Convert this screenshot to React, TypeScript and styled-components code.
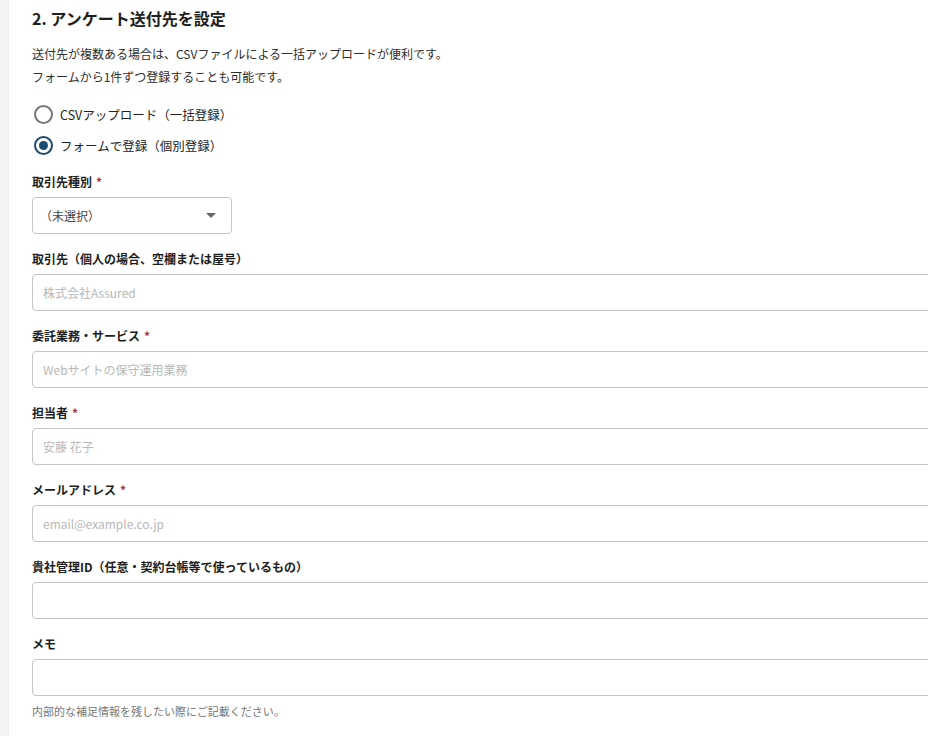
import React from "react";
import styled, { createGlobalStyle } from "styled-components";

const GlobalStyle = createGlobalStyle`
  html, body {
    margin: 0;
    padding: 0;
    background: #ffffff;
    overflow: hidden;
  }
  body {
    font-family: "Noto Sans CJK JP", "Noto Sans", sans-serif;
    color: #222;
  }
`;

interface FieldDef {
  label: string;
  required?: boolean;
  placeholder?: string;
  helper?: string;
}

const fields: FieldDef[] = [
  { label: "取引先（個人の場合、空欄または屋号）", placeholder: "株式会社Assured" },
  { label: "委託業務・サービス", required: true, placeholder: "Webサイトの保守運用業務" },
  { label: "担当者", required: true, placeholder: "安藤 花子" },
  { label: "メールアドレス", required: true, placeholder: "email@example.co.jp" },
  { label: "貴社管理ID（任意・契約台帳等で使っているもの）" },
  { label: "メモ", helper: "内部的な補足情報を残したい際にご記載ください。" },
];

const RadioOption = ({ label, checked }: { label: string; checked?: boolean }) => (
  <RadioRow>
    <RadioCircle checked={!!checked} />
    <RadioText>{label}</RadioText>
  </RadioRow>
);

const Field = ({ label, required, placeholder, helper }: FieldDef) => (
  <FieldBlock>
    <Label>
      {label}
      {required && <Star>*</Star>}
    </Label>
    <TextInput placeholder={placeholder} readOnly />
    {helper && <Helper>{helper}</Helper>}
  </FieldBlock>
);

export default function App() {
  return (
    <>
      <GlobalStyle />
      <Page>
        <Strip />
        <Main>
          <Title>2. アンケート送付先を設定</Title>
          <Description>
            送付先が複数ある場合は、CSVファイルによる一括アップロードが便利です。
            <br />
            フォームから1件ずつ登録することも可能です。
          </Description>
          <RadioGroup>
            <RadioOption label="CSVアップロード（一括登録）" />
            <RadioOption label="フォームで登録（個別登録）" checked />
          </RadioGroup>
          <Form>
            <FieldBlock>
              <Label>
                取引先種別<Star>*</Star>
              </Label>
              <Select>
                <span>（未選択）</span>
                <Caret />
              </Select>
            </FieldBlock>
            {fields.map((f) => (
              <Field key={f.label} {...f} />
            ))}
          </Form>
        </Main>
      </Page>
    </>
  );
}

const Page = styled.div`
  display: flex;
  width: 928px;
  height: 736px;
  overflow: hidden;
`;

const Strip = styled.div`
  width: 8px;
  flex-shrink: 0;
  background: #f3f3f3;
  border-right: 1px solid #ececec;
`;

const Main = styled.div`
  flex: 1;
  padding: 6px 0 0 23px;
  display: flex;
  flex-direction: column;
`;

const Title = styled.h2`
  margin: 0;
  font-size: 16px;
  line-height: 24px;
  font-weight: 700;
  color: #1e1e1e;
`;

const Description = styled.p`
  margin: 12px 0 0;
  font-size: 12px;
  line-height: 23px;
  color: #2e2e2e;
`;

const RadioGroup = styled.div`
  display: flex;
  flex-direction: column;
  gap: 9px;
  margin-top: 15px;
`;

const RadioRow = styled.label`
  display: flex;
  align-items: center;
  height: 22px;
  gap: 7px;
  padding-left: 2px;
`;

const RadioCircle = styled.span<{ checked: boolean }>`
  box-sizing: border-box;
  width: 19px;
  height: 19px;
  border-radius: 50%;
  border: 2px solid ${({ checked }) => (checked ? "#1b4a72" : "#777")};
  display: flex;
  align-items: center;
  justify-content: center;

  &::after {
    content: "";
    width: 9px;
    height: 9px;
    border-radius: 50%;
    background: #1b4a72;
    display: ${({ checked }) => (checked ? "block" : "none")};
  }
`;

const RadioText = styled.span`
  font-size: 12.5px;
  color: #222;
`;

const Form = styled.div`
  display: flex;
  flex-direction: column;
  gap: 16px;
  margin-top: 17px;
`;

const FieldBlock = styled.div`
  display: flex;
  flex-direction: column;
  gap: 6px;
`;

const Label = styled.div`
  font-size: 12px;
  line-height: 18px;
  font-weight: 700;
  color: #1e1e1e;
`;

const Star = styled.span`
  color: #a3324e;
  margin-left: 4px;
  font-weight: 700;
`;

const Select = styled.div`
  box-sizing: border-box;
  width: 200px;
  height: 37px;
  border: 1px solid #c4c4c4;
  border-radius: 4px;
  display: flex;
  align-items: center;
  justify-content: space-between;
  padding: 0 15px 0 7px;
  font-size: 12px;
  color: #444;
`;

const Caret = styled.span`
  width: 0;
  height: 0;
  border-left: 5px solid transparent;
  border-right: 5px solid transparent;
  border-top: 5px solid #666;
`;

const TextInput = styled.input`
  box-sizing: border-box;
  width: 960px;
  height: 37px;
  border: 1px solid #c4c4c4;
  border-radius: 4px;
  padding: 0 10px;
  font-family: "Noto Sans CJK JP", "Noto Sans", sans-serif;
  font-size: 12px;
  color: #222;
  outline: none;

  &::placeholder {
    color: #b8b8b8;
  }
`;

const Helper = styled.div`
  font-size: 11px;
  line-height: 18px;
  color: #777;
`;
